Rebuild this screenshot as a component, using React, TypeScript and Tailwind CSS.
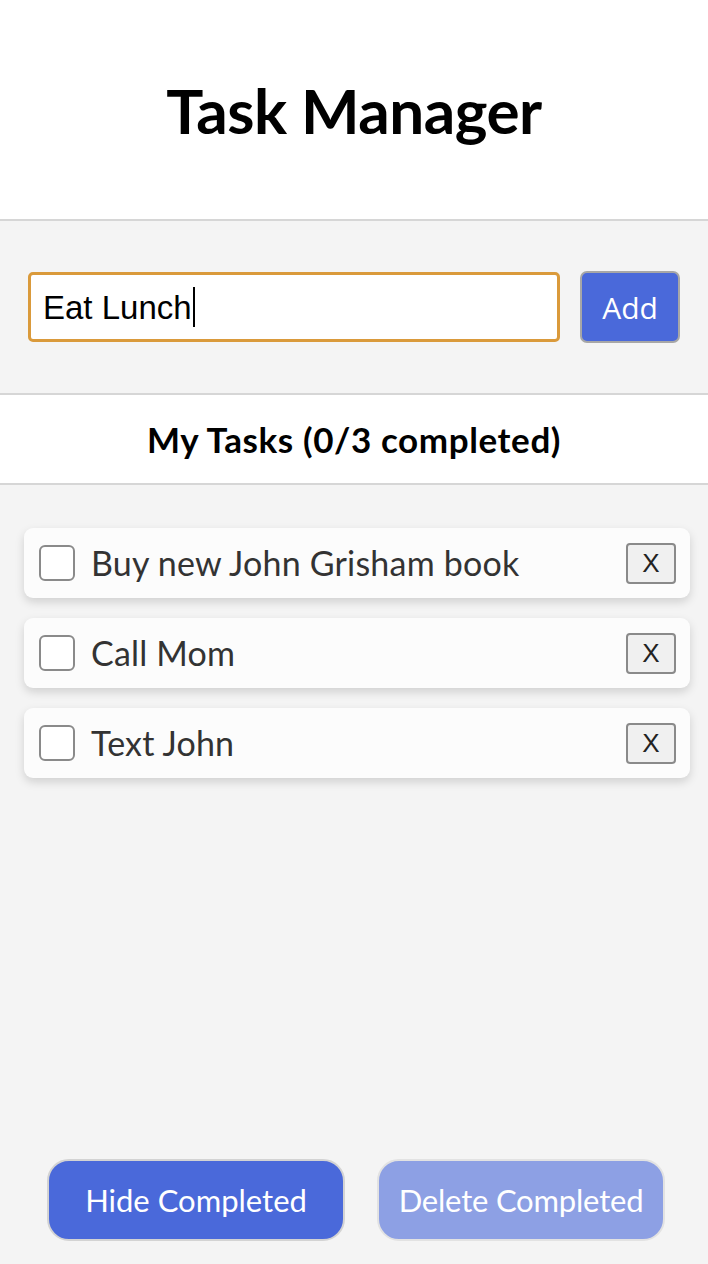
import React from "react";

const tasks = ["Buy new John Grisham book", "Call Mom", "Text John"];

export default function App() {
  const pt = { fontFamily: "Lato, 'Noto Sans', sans-serif" };
  return (
    <div className="flex h-[1264px] w-[708px] flex-col bg-[#f4f4f4]" style={pt}>
      <header className="flex h-[221px] shrink-0 items-center justify-center border-b-2 border-[#d6d6d6] bg-white">
        <h1 className="text-[62px] font-bold leading-none tracking-[-0.5px] text-black">Task Manager</h1>
      </header>
      <section className="flex h-[174px] shrink-0 items-center gap-[20px] border-b-2 border-[#d6d6d6] px-[28px]">
        <div className="flex h-[70px] w-[532px] items-center rounded-[5px] border-[3px] border-[#da9a3b] bg-white pl-[12px]">
          <span className="text-[33px] leading-none text-black" style={{ fontFamily: "'Liberation Sans', Arial, sans-serif" }}>
            Eat Lunch
          </span>
          <span className="ml-[1px] h-[40px] w-[2px] bg-black" />
        </div>
        <button className="flex h-[72px] w-[100px] items-center justify-center rounded-[7px] border-2 border-[#a7a7a7] bg-[#4a69da] text-[30px] text-white" style={{ fontFamily: "'Open Sans', sans-serif" }}>
          Add
        </button>
      </section>
      <section className="flex h-[90px] shrink-0 items-center justify-center border-b-2 border-[#d6d6d6] bg-white">
        <h2 className="text-[35px] font-bold leading-none tracking-[0.6px] text-black">My Tasks (0/3 completed)</h2>
      </section>
      <main className="flex flex-1 flex-col gap-[20px] pl-[24px] pr-[18px] pt-[43px]">
        {tasks.map((t) => (
          <div key={t} className="flex h-[70px] items-center rounded-[9px] bg-[#fcfcfc] pl-[15px] pr-[14px] shadow-[0_4px_10px_rgba(0,0,0,0.15)]">
            <span className="h-[36px] w-[36px] shrink-0 rounded-[6px] border-2 border-[#8a8a8a] bg-white" />
            <span className="ml-[16px] flex-1 text-[34px] leading-none tracking-[0.2px] text-[#333333]">{t}</span>
            <button className="flex h-[41px] w-[50px] items-center justify-center rounded-[4px] border-2 border-[#8a8a8a] bg-[#f0f0f0] text-[26px] leading-none text-[#222]" style={{ fontFamily: "'Liberation Sans', Arial, sans-serif" }}>
              X
            </button>
          </div>
        ))}
      </main>
      <footer className="flex shrink-0 justify-center gap-[32px] pb-[23px] pl-[4px]">
        <button className="flex h-[82px] w-[298px] items-center justify-center rounded-[22px] border-2 border-[#d3d3d3] bg-[#4a69da] text-[31px] text-white">
          Hide Completed
        </button>
        <button className="flex h-[82px] w-[288px] items-center justify-center rounded-[22px] border-2 border-[#e2e2e2] bg-[#8da0e4] text-[31px] text-white tracking-[-0.2px]">
          Delete Completed
        </button>
      </footer>
    </div>
  );
}
